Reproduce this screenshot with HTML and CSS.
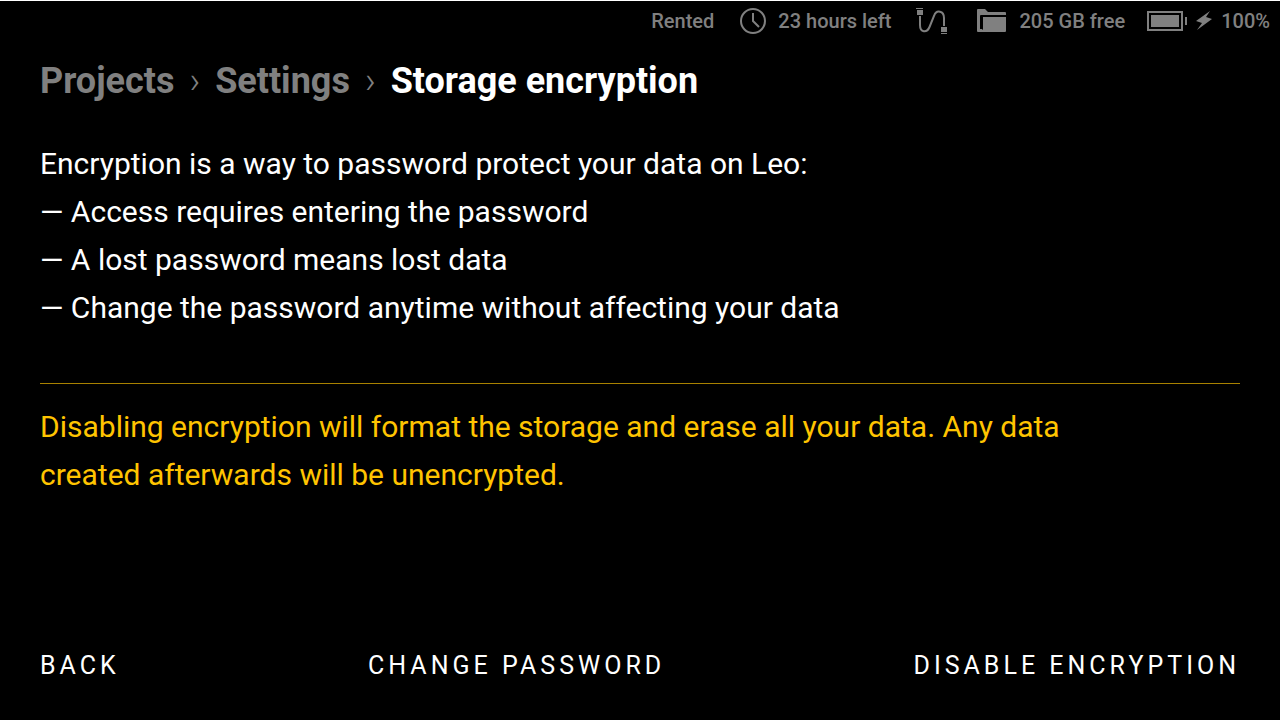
FILE: index.html
```
<!DOCTYPE html>
<html lang="en">
<head>
    <meta charset="UTF-8">
    <meta name="viewport" content="width=device-width, initial-scale=1.0">
    <title>Storage encryption</title>
    <link rel="stylesheet" href="styles.css">
</head>
<body>

    <header class="status-bar">
        <span class="status">Rented</span>
        <span class="status time">
            <svg width="28" height="28" viewBox="0 0 28 28" fill="none" stroke="currentColor" stroke-width="2">
                <circle cx="15" cy="14" r="12"/>
                <path d="M15 6v8l6 6"/>
            </svg>
            23 hours left
        </span>
        <span class="status cable">
            <svg width="32" height="28" viewBox="0 0 32 28">
                <path d="M4 9v9c0 8 7 8 9.500 2L18 9c2.500-7 10-5 10 2v8" fill="none" stroke="currentColor" stroke-width="2"/>
                <path d="M1 3h6v5H1zM0 1h7v1H0zM25 20h6v5h-6zM25 26h6v1h-6z" fill="currentColor"/>
            </svg>
        </span>
        <span class="status storage">
            <svg width="32" height="28" viewBox="0 0 32 28" fill="currentColor">
                <path d="M1 3q0-1 1-1h7l3 3h17q1 0 1 1v2H5q-1 0-1 1v13h2v3H2q-1 0-1-1z"/>
                <path d="M7 10h23v14q0 1-1 1H5v-2q2 0 2-1z"/>
            </svg>
            205 GB free
        </span>
        <span class="status battery">
            <svg width="66" height="28" viewBox="0 0 66 28">
                <rect x="1" y="5" width="34" height="18" fill="none" stroke="currentColor" stroke-width="2"/>
                <path d="M4 8h28v12H4zM38 10h2v8h-2zM63 4 49 14l6 2-5 7 15-11-6-2z" fill="currentColor"/>
            </svg>
            100%
        </span>
    </header>

    <nav class="breadcrumbs">
        <a href="#">Projects</a>
        <span class="separator">›</span>
        <a href="#">Settings</a>
        <span class="separator">›</span>
        <h1>Storage encryption</h1>
    </nav>

    <main class="content">
        <p>Encryption is a way to password protect your data on Leo:</p>
        <p>— Access requires entering the password</p>
        <p>— A lost password means lost data</p>
        <p>— Change the password anytime without affecting your data</p>
        <p class="warning">Disabling encryption will format the storage and erase all your data. Any data created afterwards will be unencrypted.</p>
    </main>

    <footer class="actions">
        <button type="button">Back</button>
        <button type="button">Change password</button>
        <button type="button">Disable encryption</button>
    </footer>

</body>
</html>
```
FILE: styles.css
```
* {
    box-sizing: border-box;
}
body {
    display: flex;
    flex-direction: column;
    min-height: 100vh;
    margin: 0;
    border-top: 1px solid white;
    background-color: black;
    color: white;
    font-family: Roboto, sans-serif;
    font-size: 30px;
    line-height: 48px;
}
.status-bar {
    display: flex;
    justify-content: flex-end;
    height: 40px;
    padding-right: 10px;
    color: #808080;
    font-size: 20px;
    font-weight: 500;
    line-height: 40px;
}
.status {
    display: flex;
    align-items: center;
    gap: 12px;
    margin-left: 24px;
}
.storage {
    margin-left: 28px;
}
.battery {
    gap: 8px;
    margin-left: 22px;
}
.breadcrumbs {
    display: flex;
    align-items: center;
    padding: 16px 40px 15px;
    color: #808080;
    font-size: 36px;
}
.breadcrumbs a {
    color: #808080;
    font-weight: bold;
    text-decoration: none;
}
.breadcrumbs h1 {
    margin: 0;
    color: white;
    font-size: 36px;
}
.separator {
    padding: 0 15px;
    font-weight: 300;
}
.content {
    flex: 1;
    padding: 20px 40px;
}
.content p {
    margin: 0;
}
.content .warning {
    margin-top: 51px;
    padding: 19px 100px 0 0;
    border-top: 1px solid #a88100;
    color: #ffc400;
}
.actions {
    display: flex;
    justify-content: space-between;
    padding: 30px 40px;
}
.actions button {
    padding: 0;
    border: none;
    background: none;
    color: white;
    font-family: inherit;
    font-size: 25px;
    line-height: 48px;
    letter-spacing: 4px;
    text-transform: uppercase;
    cursor: pointer;
}
```
